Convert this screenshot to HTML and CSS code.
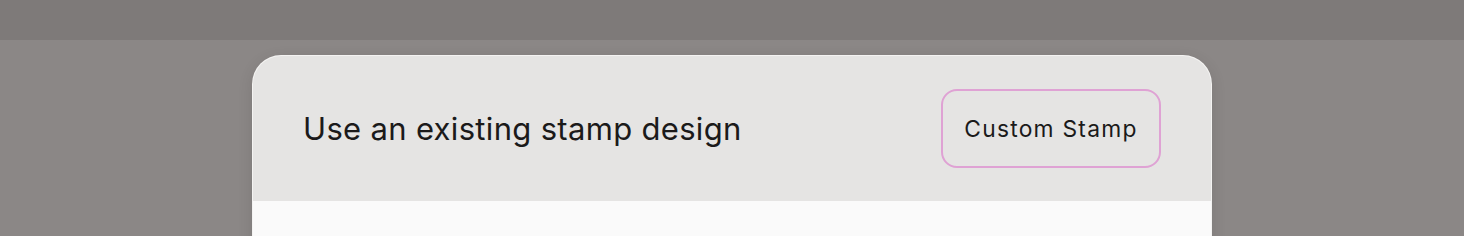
FILE: index.html
```html
<!DOCTYPE html>
<html>
<head>
<meta charset="utf-8">
<link rel="stylesheet" href="styles.css">
</head>
<body>
<div class="topbar"></div>
<main class="stage">
  <section class="card">
    <header class="card-head">
      <h1 class="title">Use an existing stamp design</h1>
      <button class="btn">Custom Stamp</button>
    </header>
    <div class="card-body"></div>
  </section>
</main>
</body>
</html>
```
FILE: styles.css
```css
html, body {
  margin: 0;
  padding: 0;
  height: 100%;
  overflow: hidden;
}
body {
  background: #8b8786;
  font-family: Inter, "Noto Sans", sans-serif;
}
.topbar {
  height: 40px;
  background: #7e7a79;
}
.stage {
  display: flex;
  justify-content: center;
  padding-top: 16px;
}
.card {
  width: 958px;
  border-radius: 28px 28px 0 0;
  overflow: hidden;
  box-shadow: 0 0 0 1px #f4f3f2, 0 4px 16px rgba(0,0,0,0.12);
  background: #fafafa;
}
.card-head {
  height: 145px;
  background: #e5e4e3;
  display: flex;
  align-items: center;
  justify-content: space-between;
  padding: 0 50px;
  box-sizing: border-box;
}
.title {
  margin: 0;
  font-size: 31px;
  font-weight: 400;
  color: #1b1a1a;
  letter-spacing: 0.32px;
}
.btn {
  width: 220px;
  height: 79px;
  border: 2px solid #dfa2d4;
  border-radius: 16px;
  background: transparent;
  font-family: Inter, "Noto Sans", sans-serif;
  font-size: 22.8px;
  font-weight: 400;
  color: #1b1a1a;
  letter-spacing: 1.25px;
  padding: 0;
}
.card-body {
  height: 200px;
  background: #fafafa;
}
```
